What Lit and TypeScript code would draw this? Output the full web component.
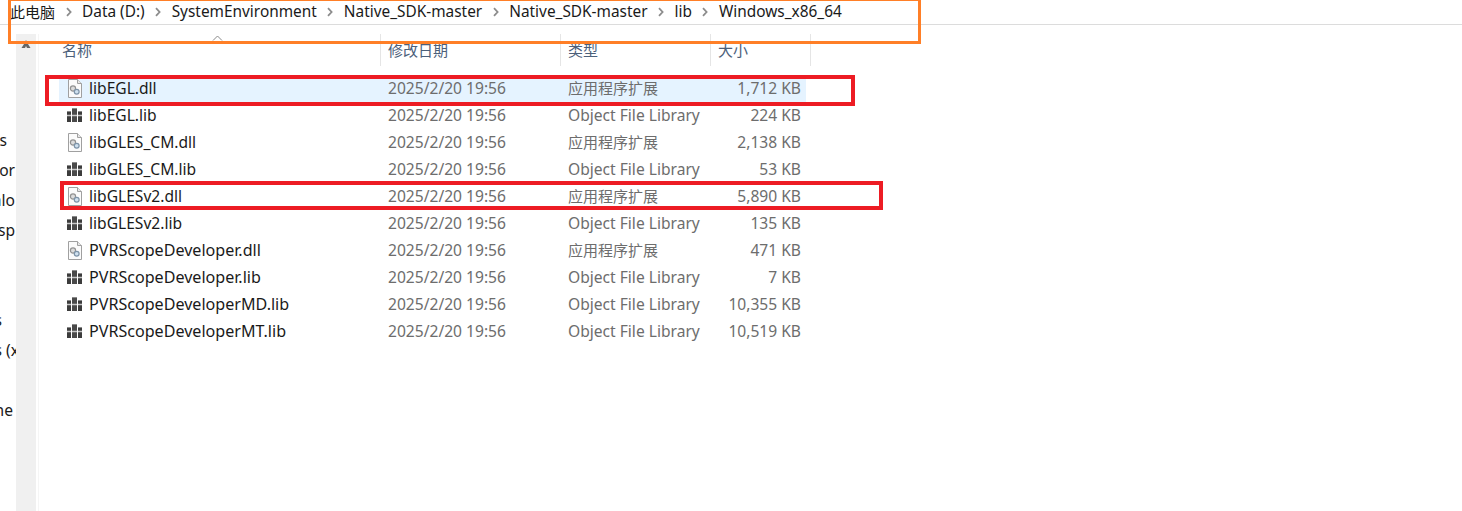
import { LitElement, html, css, svg } from "lit";
import { customElement } from "lit/decorators.js";

const DLL = "应用程序扩展";
const LIB = "Object File Library";
const rows = [
  ["libEGL.dll", DLL, "1,712 KB"],
  ["libEGL.lib", LIB, "224 KB"],
  ["libGLES_CM.dll", DLL, "2,138 KB"],
  ["libGLES_CM.lib", LIB, "53 KB"],
  ["libGLESv2.dll", DLL, "5,890 KB"],
  ["libGLESv2.lib", LIB, "135 KB"],
  ["PVRScopeDeveloper.dll", DLL, "471 KB"],
  ["PVRScopeDeveloper.lib", LIB, "7 KB"],
  ["PVRScopeDeveloperMD.lib", LIB, "10,355 KB"],
  ["PVRScopeDeveloperMT.lib", LIB, "10,519 KB"],
];
const crumbs = ["Data (D:)", "SystemEnvironment", "Native_SDK-master", "Native_SDK-master", "lib", "Windows_x86_64"];
const side: [string, number][] = [
  ["rs", 9], ["or", 1], ["alo", 1], ["sp", 1], ["", 0], ["", 0], ["s", 14], ["s (x", -3], ["", 0], ["ne", 3],
];

const chev = svg`<svg class="chev" width="6" height="10" viewBox="0 0 6 10"><path d="M1 1.2 L4.6 5 L1 8.8" fill="none" stroke="#8c8c8c" stroke-width="1.8"/></svg>`;
const dllIcon = svg`<svg class="ico" width="16" height="19" viewBox="0 0 16 19">
  <path d="M1.5 .5H10.5L14.5 4.5V18.5H1.5Z" fill="#fbfbfb" stroke="#a0a0a0"/>
  <path d="M10.5 .5V4.5H14.5" fill="#e8e8e8" stroke="#a0a0a0"/>
  <circle cx="6" cy="9.5" r="2.6" fill="#dcdcdc" stroke="#929292" stroke-width="1.2"/>
  <circle cx="9.7" cy="12.7" r="2.4" fill="#cfe0ee" stroke="#7d93a8" stroke-width="1.2"/>
</svg>`;
const libIcon = svg`<svg class="ico" width="15" height="14" viewBox="0 0 15 14">
  <rect x="0" y="3" width="4" height="11" fill="#3c3c3c"/>
  <rect x="5" y="0" width="5" height="14" fill="#4a4a4a"/>
  <rect x="11" y="3" width="4" height="11" fill="#3c3c3c"/>
  <path d="M0 7.5h4M5 7.5h5M11 7.5h4" stroke="#c8c8c8" stroke-width="1.5"/>
  <path d="M0 3.5h4M5 .5h5M11 3.5h4" stroke="#8a8a8a"/>
</svg>`;

@customElement("app-root")
export class AppRoot extends LitElement {
  static styles = css`
    :host {
      display: block;
      position: relative;
      width: 1462px;
      height: 511px;
      overflow: hidden;
      background: #fff;
      font-family: "Noto Sans", "Noto Sans CJK SC", sans-serif;
      font-size: 15.6px;
    }
    .cjk { font-size: 15px; }
    .crumbs {
      height: 25px;
      box-sizing: border-box;
      border-bottom: 1px solid #dcdcdc;
      display: flex;
      align-items: center;
      padding: 0 0 1px 10px;
      color: #1a1a1a;
      white-space: nowrap;
      font-size: 15.4px;
    }
    .crumb { line-height: 22px; }
    .crumb.cjk { font-size: 15px; }
    .chev { margin: 1px 10.5px 0 10.5px; flex: none; }
    .main {
      display: flex;
      height: 486px;
    }
    .tree {
      width: 16px;
      overflow: hidden;
      flex: none;
      padding-top: 100px;
      box-sizing: border-box;
      color: #1a1a1a;
    }
    .tree div {
      width: 16px;
      height: 30px;
      line-height: 30px;
      display: flex;
      justify-content: flex-end;
      white-space: nowrap;
    }
    .strip {
      width: 20px;
      margin-top: 9px;
      background: #f0f0f0;
      flex: none;
      display: flex;
      justify-content: center;
      align-items: flex-start;
      padding-top: 6px;
      box-sizing: border-box;
    }
    .gap {
      width: 3px;
      margin-top: 9px;
      border-right: 1px solid #f5f5f5;
      flex: none;
      box-sizing: border-box;
    }
    .list { flex: none; width: 800px; padding-left: 20px; box-sizing: border-box; }
    .head {
      position: relative;
      height: 32px;
      margin-top: 9px;
      display: grid;
      grid-template-columns: 322px 180px 150px 100px;
      color: #4c607a;
      margin-bottom: 9px;
      line-height: 32px;
    }
    .head div {
      box-sizing: border-box;
      padding-left: 7px;
      border-right: 1px solid #e5e5e5;
    }
    .head div:first-of-type { padding-left: 3px; }
    .sort { position: absolute; left: 153px; top: 1px; }
    .row {
      width: 747px;
      height: 27px;
      box-sizing: border-box;
      padding-bottom: 1px;
      display: grid;
      grid-template-columns: 321px 180px 150px 91px;
      align-items: center;
      color: #6d6d6d;
      white-space: nowrap;
    }
    .row.sel { background: #e5f3ff; }
    .name { display: flex; align-items: center; color: #1a1a1a; padding-left: 8px; }
    .name.wide { font-size: 16.1px; }
    .icw { width: 22px; display: flex; flex: none; }
    .date { padding-left: 8px; }
    .type { padding-left: 8px; }
    .type.cjk { padding: 0 0 1px 8px; }
    .size { text-align: right; }
    .mark { position: absolute; box-sizing: border-box; pointer-events: none; }
    .orange { left: 8px; top: -2px; width: 913px; height: 46px; border: 3px solid #ff7f27; }
    .red { border: 4px solid #ed1c24; }
    .r1 { left: 45px; top: 75px; width: 810px; height: 31px; }
    .r2 { left: 60px; top: 181px; width: 823px; height: 29px; }
  `;

  render() {
    return html`
      <div class="crumbs">
        <span class="crumb cjk">此电脑</span>
        ${crumbs.map((c) => html`${chev}<span class="crumb">${c}</span>`)}
      </div>
      <div class="main">
        <div class="tree">
          ${side.map(([t, m]) => html`<div><span style="margin-right:${m}px">${t}</span></div>`)}
        </div>
        <div class="strip">
          <svg width="10" height="9" viewBox="0 0 10 9"><path d="M5 0 L7 4 L9.5 8 H6 L5 6 L4 8 H.5 L3 4Z" fill="#666"/></svg>
        </div>
        <div class="gap"></div>
        <div class="list">
          <div class="head">
            <svg class="sort" width="11" height="6" viewBox="0 0 11 6"><path d="M1 5.5 L5.5 1 L10 5.5" fill="none" stroke="#8a8a8a"/></svg>
            <div class="cjk">名称</div><div class="cjk">修改日期</div><div class="cjk">类型</div><div class="cjk">大小</div>
          </div>
          ${rows.map(
            (r, i) => html`<div class="row ${i === 0 ? "sel" : ""}">
              <div class="name ${r[0].startsWith("PVR") ? "wide" : ""}"><span class="icw">${r[0].endsWith("dll") ? dllIcon : libIcon}</span>${r[0]}</div>
              <div class="date">2025/2/20 19:56</div>
              <div class="type ${r[1] === DLL ? "cjk" : ""}">${r[1]}</div>
              <div class="size">${r[2]}</div>
            </div>`
          )}
        </div>
      </div>
      <div class="mark orange"></div>
      <div class="mark red r1"></div>
      <div class="mark red r2"></div>
    `;
  }
}
